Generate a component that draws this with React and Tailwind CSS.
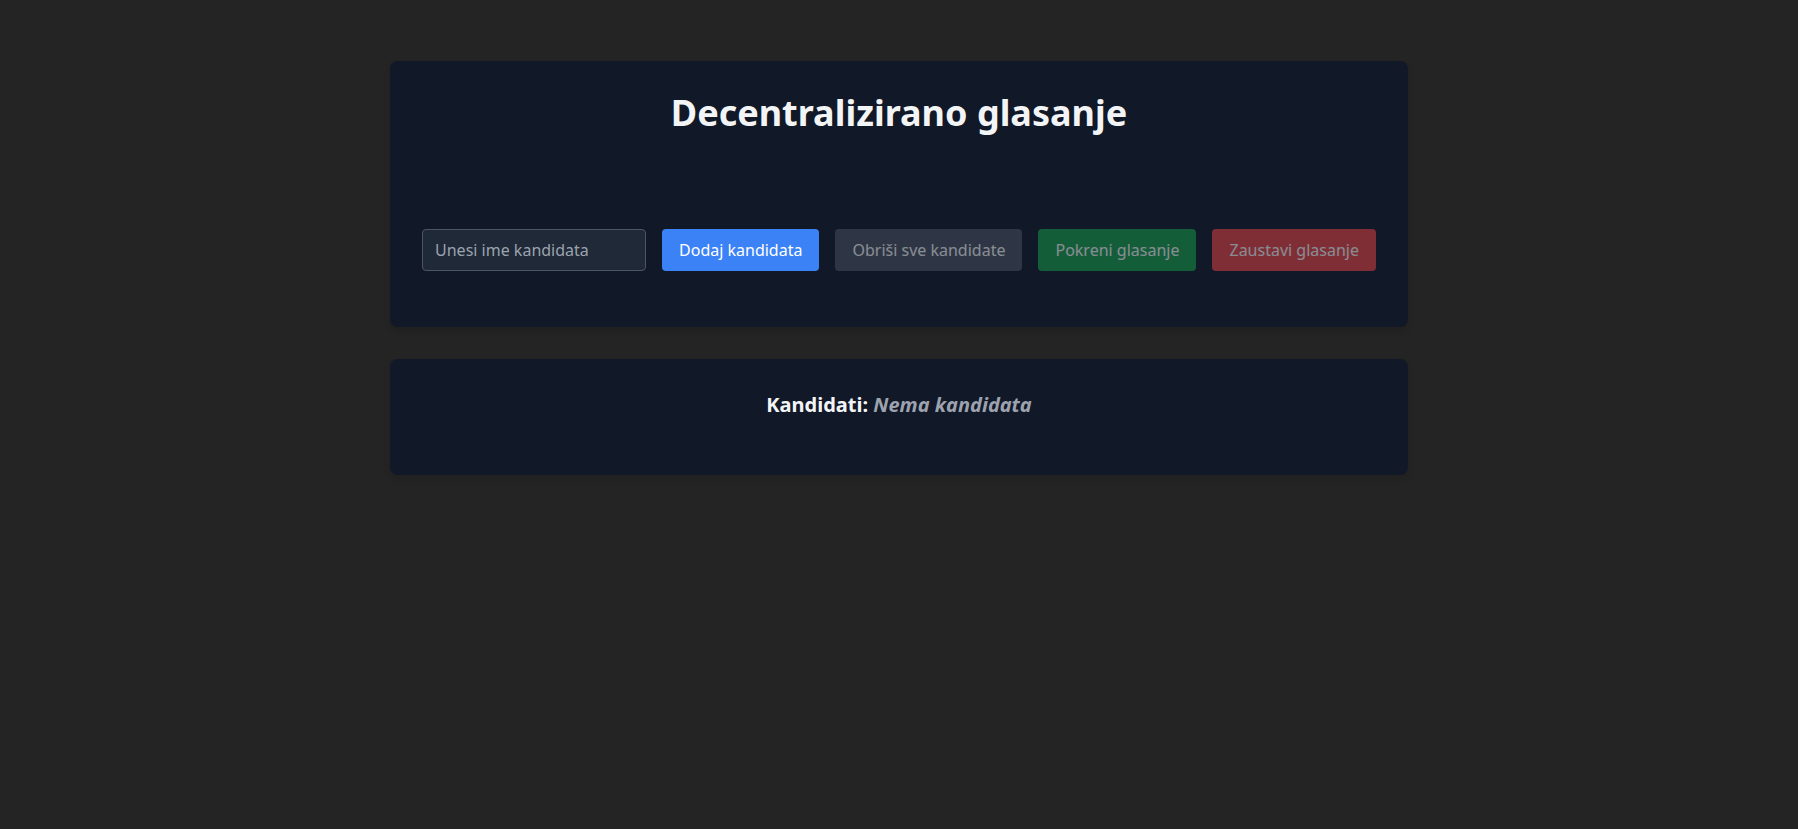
import React, { useState } from "react";

const App = () => {
  const [name, setName] = useState("");
  const [candidates] = useState([]);

  return (
    <div className="min-h-screen bg-[#242424] pt-[61px] font-['Noto_Sans',sans-serif]">
      {/* Controls card */}
      <div className="w-[1018px] mx-auto bg-[#111827] rounded-lg shadow-[0_4px_6px_rgba(0,0,0,0.12)] px-8 pt-8 pb-14">
        <h1 className="text-4xl font-bold text-[#f3f4f6] text-center mb-24">
          Decentralizirano glasanje
        </h1>

        <div className="flex justify-center gap-4">
          <input
            type="text"
            placeholder="Unesi ime kandidata"
            value={name}
            onChange={(e) => setName(e.target.value)}
            className="w-56 h-[42px] px-3 bg-[#1f2937] border border-[#4b5563] rounded text-[#f3f4f6] placeholder-[#9ca3af] outline-none"
          />
          <button className="h-[42px] px-[17px] bg-[#3b82f6] text-white rounded">
            Dodaj kandidata
          </button>
          <button disabled className="h-[42px] px-[17px] bg-[#4b5563] text-white rounded opacity-50">
            Obriši sve kandidate
          </button>
          <button disabled className="h-[42px] px-[17px] bg-[#16a34a] text-white rounded opacity-50">
            Pokreni glasanje
          </button>
          <button disabled className="h-[42px] px-[17px] bg-[#ef4444] text-white rounded opacity-50">
            Zaustavi glasanje
          </button>
        </div>
      </div>

      {/* Candidates card */}
      <div className="w-[1018px] mx-auto mt-8 bg-[#111827] rounded-lg shadow-[0_4px_6px_rgba(0,0,0,0.12)] px-8 pt-8 pb-14">
        <p className="text-xl font-bold text-[#f3f4f6] text-center">
          Kandidati:{" "}
          {candidates.length === 0 ? (
            <span className="italic text-[#9ca3af]">Nema kandidata</span>
          ) : (
            candidates.join(", ")
          )}
        </p>
      </div>
    </div>
  );
};

export default App;
